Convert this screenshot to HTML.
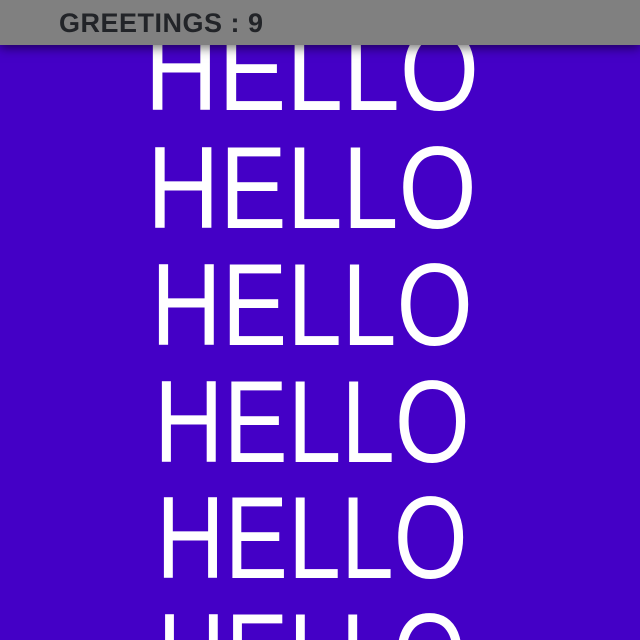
<!DOCTYPE html>
<html style="overflow:hidden;height:640px"><head><style>
html,body{margin:0;width:640px;height:640px;overflow:hidden}
body{background:#4400c6;font-family:"Liberation Sans",sans-serif}
.wrap{position:absolute;top:0;left:0;width:640px;height:640px;overflow:hidden}
.l{position:absolute;left:0;width:624px;text-align:center;color:#fff;font-size:117px;line-height:117px;height:117px}
.l span{display:inline-block}
.h{position:absolute;top:0;left:0;width:640px;height:45px;background:#808080;box-shadow:0 3px 10px rgba(0,0,0,.55);z-index:2}
.h div{position:absolute;left:59px;top:8px;font-size:27px;font-weight:bold;color:#222428;letter-spacing:0.5px}
</style></head><body>
<div class="wrap">
<div class="h"><div>GREETINGS : 9</div></div>
<div class="l" style="top:11px"><span style="transform:scaleX(.872)">HELLO</span></div>
<div class="l" style="top:129px"><span style="transform:scaleX(.859)">HELLO</span></div>
<div class="l" style="top:246px"><span style="transform:scaleX(.839)">HELLO</span></div>
<div class="l" style="top:363px"><span style="transform:scaleX(.823)">HELLO</span></div>
<div class="l" style="top:479px"><span style="transform:scaleX(.812)">HELLO</span></div>
<div class="l" style="top:596px;height:44px;overflow:hidden"><span style="transform:scaleX(.805);height:44px;overflow:hidden;vertical-align:top">HELLO</span></div>
</div>
</body></html>
